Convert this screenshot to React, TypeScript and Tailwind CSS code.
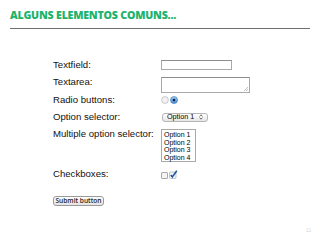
const label = "w-[108px] shrink-0 text-[9.6px] leading-[12px] text-[#111]";

function Radio({ checked }: { checked?: boolean }) {
  return checked ? (
    <svg width="8" height="8" viewBox="0 0 8 8">
      <defs>
        <linearGradient id="rb" x1="0" y1="0" x2="0" y2="1">
          <stop offset="0" stopColor="#a9cff3" />
          <stop offset="1" stopColor="#3d8fe0" />
        </linearGradient>
      </defs>
      <circle cx="4" cy="4" r="3.5" fill="url(#rb)" stroke="#3a6fb0" strokeWidth="0.6" />
      <circle cx="4" cy="4" r="1.3" fill="#0d1f3a" />
    </svg>
  ) : (
    <svg width="8" height="8" viewBox="0 0 8 8">
      <circle cx="4" cy="4" r="3.4" fill="#f2f2f2" stroke="#aaa" strokeWidth="0.6" />
    </svg>
  );
}

export default function App() {
  return (
    <div className="relative w-[320px] h-[240px] bg-white overflow-hidden font-['Liberation_Sans',Arial,sans-serif]">
      <div className="px-[10px] pt-[9px]">
        <h1 className="font-['Open_Sans',sans-serif] font-extrabold text-[10.6px] leading-[12px] tracking-[-0.2px] text-[#1db36c]">
          ALGUNS ELEMENTOS COMUNS...
        </h1>
        <div className="mt-[6.5px] h-[1.5px] bg-[#6e6e6e]" />
      </div>

      <div className="pl-[53px] pt-[30px] flex flex-col">
        <div className="flex items-center h-[12px]">
          <span className={label}>Textfield:</span>
          <div className="w-[71px] h-[10px] border border-[#a9a9a9] border-t-[#8e8e8e] bg-white" />
        </div>

        <div className="flex items-start h-[18px] mt-[5px]">
          <span className={label}>Textarea:</span>
          <div className="relative w-[89px] h-[16px] mt-[1px] border border-[#a9a9a9] border-t-[#8e8e8e] bg-white">
            <svg className="absolute right-[1px] bottom-[1px]" width="5" height="5" viewBox="0 0 5 5">
              <path d="M1 5 L5 1 M3 5 L5 3" stroke="#999" strokeWidth="0.6" />
            </svg>
          </div>
        </div>

        <div className="flex items-center h-[12px]">
          <span className={label}>Radio buttons:</span>
          <div className="flex gap-[0.5px]">
            <Radio />
            <Radio checked />
          </div>
        </div>

        <div className="flex items-center h-[12px] mt-[5px]">
          <span className={label}>Option selector:</span>
          <div className="ml-[1px] flex items-center justify-between w-[46px] h-[9px] pl-[4px] pr-[4px] rounded-[3px] border border-[#b5b5b5] bg-gradient-to-b from-white to-[#e6e6e6] text-[7.2px] leading-none text-black">
            <span>Option 1</span>
            <svg width="4" height="6" viewBox="0 0 4 6">
              <path d="M0.6 2.4 L2 0.8 L3.4 2.4 M0.6 3.6 L2 5.2 L3.4 3.6" fill="none" stroke="#333" strokeWidth="0.7" />
            </svg>
          </div>
        </div>

        <div className="flex items-start h-[35px] mt-[5px]">
          <span className={label}>Multiple option selector:</span>
          <div className="mt-[1px] w-[35px] h-[33px] border border-[#a9a9a9] bg-white px-[2px] pt-[1px] text-[7px] leading-[7.7px] text-black flex flex-col">
            <span>Option 1</span>
            <span>Option 2</span>
            <span>Option 3</span>
            <span>Option 4</span>
          </div>
        </div>

        <div className="flex items-center h-[12px] mt-[5px]">
          <span className={label}>Checkboxes:</span>
          <div className="flex items-end gap-[1px]">
            <div className="w-[7px] h-[7px] rounded-[1px] border border-[#aaa] bg-[#f4f4f4]" />
            <svg width="9" height="9" viewBox="0 0 9 9">
              <rect x="0.5" y="2" width="6.5" height="6.5" rx="1" fill="#f4f4f4" stroke="#8aa" strokeWidth="0.6" />
              <path d="M1.8 5 L3.3 7 L7.8 0.8" fill="none" stroke="#1d4fa3" strokeWidth="1.5" />
            </svg>
          </div>
        </div>

        <div className="flex mt-[16px]">
          <button className="flex items-center justify-center h-[10px] w-[51px] rounded-[3px] border border-[#9a9a9a] bg-gradient-to-b from-white to-[#e4e4e4] font-['Open_Sans',sans-serif] text-[6.6px] leading-none font-semibold text-[#222]">
            Submit button
          </button>
        </div>
      </div>

      <span className="absolute left-[306px] top-[227px] text-[5px] text-[#d5d5d5]">11</span>
    </div>
  );
}
